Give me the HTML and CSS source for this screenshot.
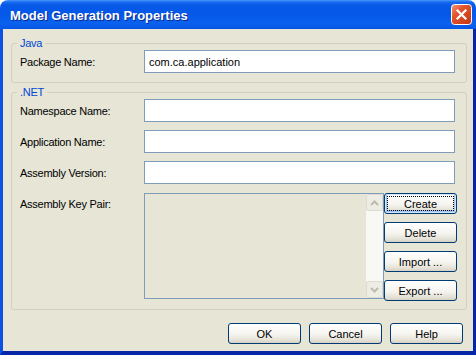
FILE: index.html
```html
<!DOCTYPE html>
<html lang="en">
  <head>
    <meta charset="UTF-8" />
    <title>Model Generation Properties</title>
    <link rel="stylesheet" href="styles.css">
  </head>
  <body>
    <div class="window">
      <div class="titlebar">
        <span class="title">Model Generation Properties</span>
        <button class="close" title="Close">
          <svg width="21" height="21" viewBox="0 0 21 21">
            <defs>
              <linearGradient id="closeFill" x1="0" y1="0" x2="1" y2="1">
                <stop offset="0" stop-color="#f29a7c" />
                <stop offset="0.35" stop-color="#e2562f" />
                <stop offset="1" stop-color="#c2350f" />
              </linearGradient>
            </defs>
            <rect x="0.5" y="0.5" width="20" height="20" rx="3" fill="url(#closeFill)" stroke="#fff" />
            <path d="M6.5 6.5 L14.5 14.5 M14.5 6.5 L6.5 14.5" stroke="#fff" stroke-width="2.2" stroke-linecap="square" />
          </svg>
        </button>
      </div>

      <div class="client">
        <fieldset class="group">
          <legend>Java</legend>
          <div class="row">
            <label for="packageName">Package Name:</label>
            <input id="packageName" type="text" value="com.ca.application" />
          </div>
        </fieldset>

        <fieldset class="group net">
          <legend>.NET</legend>
          <div class="row">
            <label for="nsName">Namespace Name:</label>
            <input id="nsName" type="text" />
          </div>
          <div class="row">
            <label for="appName">Application Name:</label>
            <input id="appName" type="text" />
          </div>
          <div class="row">
            <label for="asmVersion">Assembly Version:</label>
            <input id="asmVersion" type="text" />
          </div>
          <div class="row keypair">
            <label>Assembly Key Pair:</label>
            <div class="listbox">
              <div class="scrollbar">
                <div class="scroll-btn">
                  <svg width="9" height="6" viewBox="0 0 9 6"><path d="M1 5 L4.5 1.5 L8 5" fill="none" stroke="#bdbbae" stroke-width="2" /></svg>
                </div>
                <div class="scroll-track"></div>
                <div class="scroll-btn">
                  <svg width="9" height="6" viewBox="0 0 9 6"><path d="M1 1 L4.5 4.5 L8 1" fill="none" stroke="#bdbbae" stroke-width="2" /></svg>
                </div>
              </div>
            </div>
            <div class="side-buttons">
              <button class="btn default"><span>Create</span></button>
              <button class="btn"><span>Delete</span></button>
              <button class="btn"><span>Import ...</span></button>
              <button class="btn"><span>Export ...</span></button>
            </div>
          </div>
        </fieldset>

        <div class="footer">
          <button class="btn"><span>OK</span></button>
          <button class="btn"><span>Cancel</span></button>
          <button class="btn"><span>Help</span></button>
        </div>
      </div>
    </div>
  </body>
</html>
```

FILE: styles.css
```css
body {
  margin: 0;
  font-family: "Liberation Sans", Arial, sans-serif;
  font-size: 11px;
  letter-spacing: -0.25px;
  color: #000;
}
.window {
  width: 476px;
  height: 355px;
  display: flex;
  flex-direction: column;
}
.titlebar {
  flex: none;
  height: 29px;
  box-sizing: border-box;
  display: flex;
  align-items: center;
  justify-content: space-between;
  padding: 2px 4px 0 10px;
  border-radius: 8px 8px 0 0;
  background: linear-gradient(#4a97fa 0, #1a6cf0 2px, #0759e8 5px, #0458e8 50%, #0b62ef 80%, #0656e4 100%);
}
.title {
  color: #fff;
  font-size: 13px;
  font-weight: bold;
  letter-spacing: 0;
  text-shadow: 1px 1px 0 #0b2a8e;
}
.close {
  width: 21px;
  height: 21px;
  padding: 0;
  border: none;
  background: none;
  margin-top: -2px;
}
.close svg {
  display: block;
}
.client {
  flex: 1;
  background: #e6e5d6;
  border-left: 3px solid #0a52e6;
  border-right: 3px solid #0626a8;
  border-bottom: 4px solid #0626a8;
  display: flex;
  flex-direction: column;
}
.group {
  margin: 8px 6px 0 8px;
  padding: 0 9px 9px 8px;
  border: 1px solid #d0d0bf;
  border-radius: 3px;
  min-width: 0;
}
.group legend {
  color: #0046d5;
  line-height: 13px;
  padding: 0 3px;
  margin-left: -3px;
}
.net {
  margin-top: 3px;
  padding-bottom: 8px;
  display: grid;
  row-gap: 8px;
}
.row {
  display: grid;
  grid-template-columns: 124px 1fr 73px;
  align-items: center;
}
.row input {
  grid-column: 2 / 4;
  height: 23px;
  box-sizing: border-box;
  margin: 0 2px 0 0;
  padding: 0 4px;
  border: 1px solid #7f9db9;
  background: #fff;
  font: inherit;
  outline: none;
}
.keypair {
  align-items: start;
}
.keypair label {
  padding-top: 6px;
}
.listbox {
  height: 106px;
  box-sizing: border-box;
  border: 1px solid #7f9db9;
  display: flex;
  justify-content: flex-end;
  margin-top: 1px;
}
.scrollbar {
  width: 17px;
  display: flex;
  flex-direction: column;
  background: #f6f6f1;
}
.scroll-btn {
  height: 17px;
  box-sizing: border-box;
  border: 1px solid #dcdbd2;
  border-radius: 2px;
  background: #eeede5;
  display: flex;
  align-items: center;
  justify-content: center;
}
.scroll-track {
  flex: 1;
  background: #f8f8f4;
}
.side-buttons {
  display: flex;
  flex-direction: column;
  gap: 8px;
  margin-top: 1px;
}
.btn {
  width: 73px;
  height: 21px;
  box-sizing: border-box;
  padding: 2px;
  border: 1px solid #003c74;
  border-radius: 3px;
  background: linear-gradient(#ffffff, #f5f4ef 55%, #e4e1d6 85%, #d6d0c4);
  font: inherit;
  color: #000;
  display: flex;
}
.btn span {
  flex: 1;
  display: flex;
  align-items: center;
  justify-content: center;
  border: 1px dotted transparent;
}
.btn.default {
  box-shadow: inset 0 0 0 1px #cee7ff, inset 0 -1px 0 2px #a6c3ee;
}
.btn.default span {
  border-color: #000;
}
.footer {
  display: flex;
  justify-content: flex-end;
  gap: 8px;
  margin-top: 13px;
  padding-right: 10px;
}
```
